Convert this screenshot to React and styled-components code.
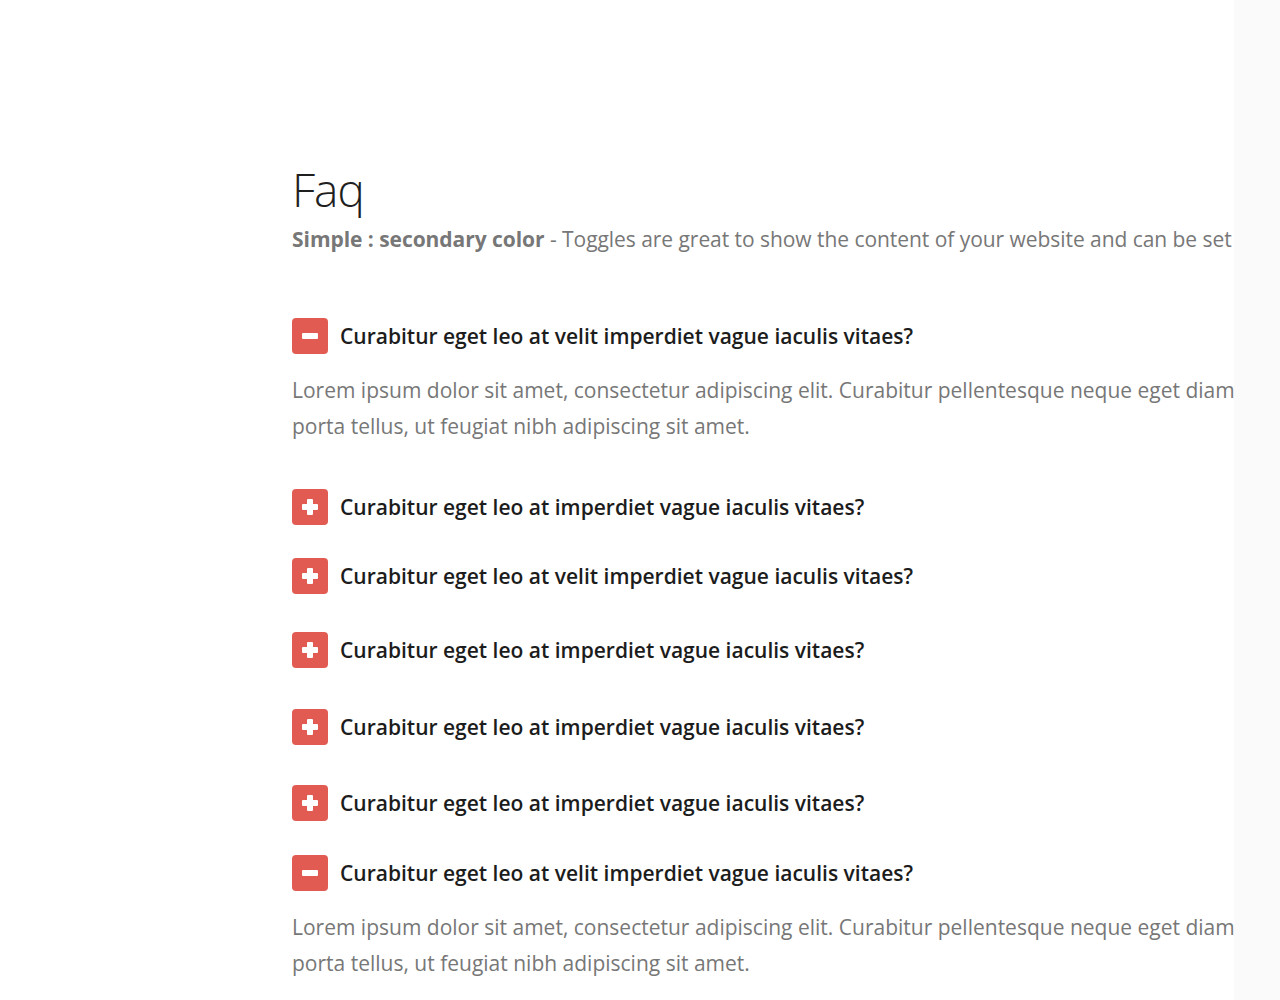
import React, { useState } from "react"
import styled, { createGlobalStyle } from "styled-components"

const Global = createGlobalStyle`
  html, body { margin: 0; padding: 0; background: #fff; }
  body { font-family: "Open Sans", "Liberation Sans", sans-serif; }
`

const Page = styled.div`
  display: flex;
  min-height: 1000px;
  overflow: hidden;
`

const Main = styled.div`
  flex: 1;
  padding: 159px 0 0 292px;
  min-width: 0;
`

const Side = styled.div`
  width: 46px;
  background: #fafafa;
`

const Content = styled.div`
  width: 944px;
`

const Title = styled.h1`
  margin: 0;
  font-size: 46px;
  line-height: 60px;
  font-weight: 300;
  color: #1f1f1f;
  letter-spacing: -1px;
`

const Lead = styled.p`
  margin: 5px 0 0;
  font-size: 21px;
  line-height: 30px;
  color: #777;
  white-space: nowrap;
  letter-spacing: -0.05px;
  strong { font-weight: 700; color: #777; }
`

const List = styled.div`
  margin-top: 64px;
`

const Item = styled.div`
  margin-top: ${(p) => p.$space}px;
`

const Head = styled.div`
  display: flex;
  align-items: center;
  gap: 12px;
  cursor: pointer;
`

const Toggle = styled.span`
  width: 36px;
  height: 36px;
  border-radius: 4px;
  background: #e25b53;
  display: flex;
  align-items: center;
  justify-content: center;
  flex: none;
`

const Question = styled.span`
  font-size: 21px;
  line-height: 30px;
  font-weight: 600;
  color: #1c1c1c;
`

const Answer = styled.p`
  margin: 18px 0 0;
  font-size: 21px;
  line-height: 36px;
  color: #777;
`

const Icon = ({ open }) => (
  <svg width="16" height="16" viewBox="0 0 16 16">
    <rect x="0" y="5" width="16" height="6" rx="1" fill="#fff" />
    {!open && <rect x="5" y="0" width="6" height="16" rx="1" fill="#fff" />}
  </svg>
)

const lorem =
  "Lorem ipsum dolor sit amet, consectetur adipiscing elit. Curabitur pellentesque neque eget diam porta tellus, ut feugiat nibh adipiscing sit amet."

const items = [
  { q: "Curabitur eget leo at velit imperdiet vague iaculis vitaes?", open: true, space: 0 },
  { q: "Curabitur eget leo at imperdiet vague iaculis vitaes?", space: 45 },
  { q: "Curabitur eget leo at velit imperdiet vague iaculis vitaes?", space: 33 },
  { q: "Curabitur eget leo at imperdiet vague iaculis vitaes?", space: 38 },
  { q: "Curabitur eget leo at imperdiet vague iaculis vitaes?", space: 41 },
  { q: "Curabitur eget leo at imperdiet vague iaculis vitaes?", space: 40 },
  { q: "Curabitur eget leo at velit imperdiet vague iaculis vitaes?", open: true, space: 34 },
]

const FaqItem = ({ data }) => {
  const [open, setOpen] = useState(!!data.open)
  return (
    <Item $space={data.space}>
      <Head onClick={() => setOpen(!open)}>
        <Toggle>
          <Icon open={open} />
        </Toggle>
        <Question>{data.q}</Question>
      </Head>
      {open && <Answer>{lorem}</Answer>}
    </Item>
  )
}

export default function App() {
  return (
    <Page>
      <Global />
      <Main>
        <Content>
          <Title>Faq</Title>
          <Lead>
            <strong>Simple : secondary color</strong> - Toggles are great to show the
            content of your website and can be set
          </Lead>
          <List>
            {items.map((it, i) => (
              <FaqItem key={i} data={it} />
            ))}
          </List>
        </Content>
      </Main>
      <Side />
    </Page>
  )
}
